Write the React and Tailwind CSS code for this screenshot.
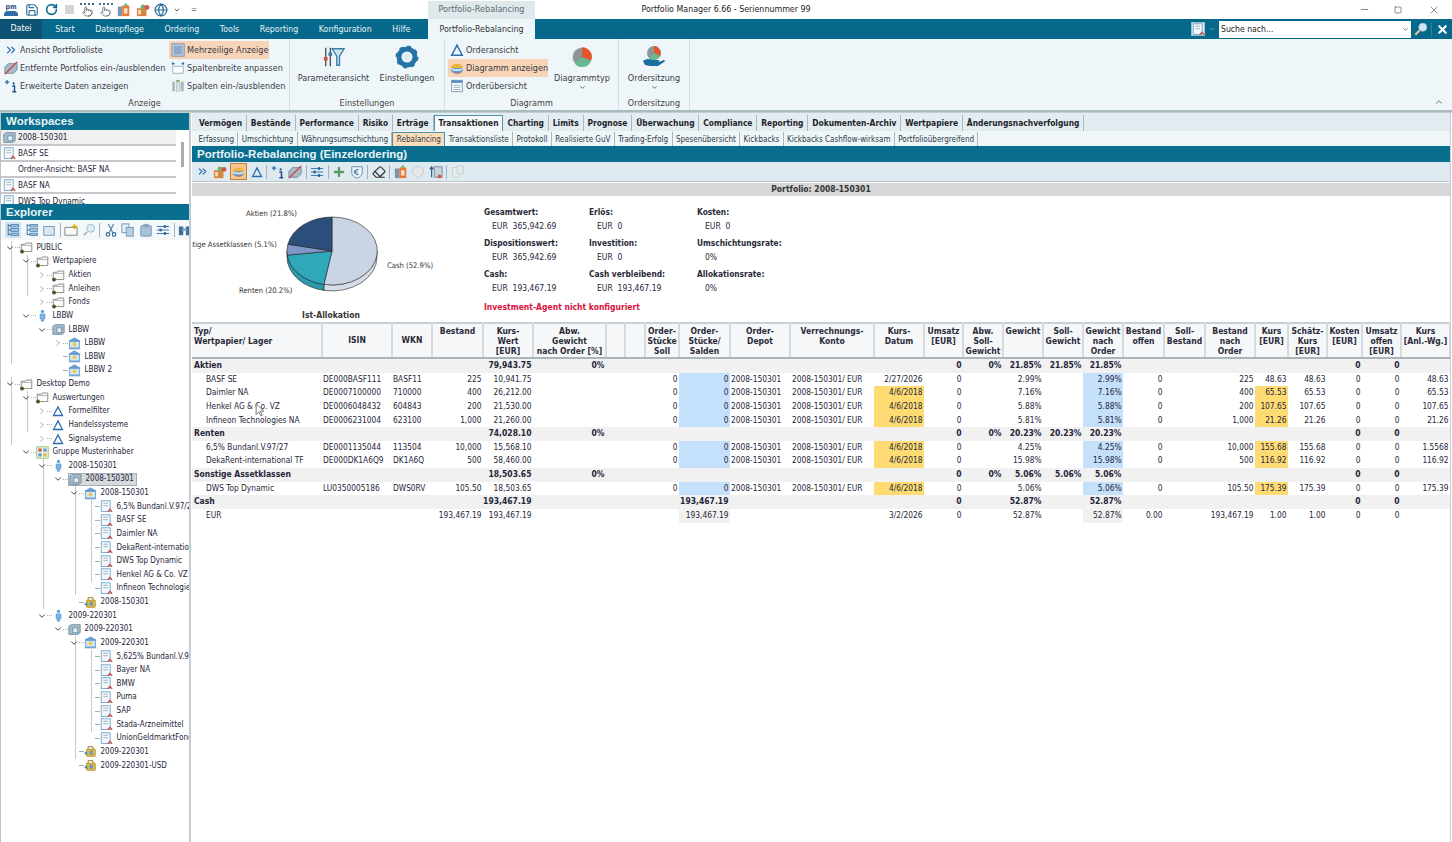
import { ChevronDown, ChevronRight, ChevronsRight, ChevronUp, Minus, Square, X, Save, RotateCw, Pointer, Globe, Plus, Eraser } from 'lucide-react';

// kleine Icons
const Ico = ({ children, className = 'w-[14px] h-[14px]' }) => (
  <svg viewBox="0 0 16 16" className={`shrink-0 ${className}`}>{children}</svg>
);

const Doc = () => (
  <Ico className="w-[13px] h-[13px]">
    <rect x="1.5" y="1" width="11" height="13" fill="#f4f8fb" stroke="#5f9cc4" />
    <path d="M4 4h6M4 7h6" stroke="#9aa7b0" />
    <path d="M9.5 14.5l2.5-3 3 3" fill="none" stroke="#c9443e" strokeWidth="1.5" />
  </Ico>
);
const Folder = () => (
  <Ico className="w-[13px] h-[13px]">
    <path d="M1.5 4h5l1-1.5h7V13h-13z" fill="#fafafa" stroke="#777" />
    <path d="M1.5 5.5h13" stroke="#aaa" />
    <circle cx="2.5" cy="13" r="2" fill="#6b5a10" stroke="#111" strokeWidth=".6" />
  </Ico>
);
const Person = () => (
  <Ico className="w-[13px] h-[13px]">
    <circle cx="8" cy="3" r="2" fill="#5aa0e0" />
    <path d="M5 6h6v6H9.500v3h-3v-3H5z" fill="#78b4ea" stroke="#3d7fbd" strokeWidth=".6" />
  </Ico>
);
const Depot = () => (
  <Ico className="w-[13px] h-[13px]">
    <path d="M1 4l3-2h11v10l-3 2H1z" fill="#a3bacb" stroke="#6d8aa0" />
    <rect x="6" y="6" width="6" height="6" fill="#e5edf3" stroke="#6d8aa0" />
  </Ico>
);
const Bank = () => (
  <Ico className="w-[13px] h-[13px]">
    <path d="M8 1L1 5h14z" fill="#6aa4d4" stroke="#3d7fbd" strokeWidth=".6" />
    <rect x="2" y="5.500" width="12" height="8" fill="#d5e6f4" stroke="#5c96c6" />
    <rect x="6" y="7" width="4" height="4" fill="#ecc544" />
    <path d="M1 14.500h14" stroke="#3d7fbd" />
  </Ico>
);
const Locker = () => (
  <Ico className="w-[13px] h-[13px]">
    <path d="M5 5V2h6v3" fill="none" stroke="#8a6d10" />
    <rect x="3" y="5" width="11" height="9" rx="1" fill="#e6b93a" stroke="#8a6d10" strokeWidth=".6" />
    <path d="M0 10l4-2.500v5z" fill="#4a86bf" />
    <rect x="7" y="7" width="4" height="5" fill="#5f9cd0" />
  </Ico>
);
const Delta = ({ cls = 'w-[12px] h-[12px]' }) => (
  <Ico className={cls}><path d="M8 2.500L14 14H2z" fill="none" stroke="#2b6cb0" strokeWidth="1.700" /></Ico>
);
const GroupIco = () => (
  <Ico className="w-[13px] h-[13px]">
    <rect x="1" y="1" width="14" height="14" fill="#eef5e6" stroke="#8ab86a" />
    <rect x="3" y="3" width="4" height="4" fill="#d9534f" />
    <rect x="9" y="3" width="4" height="4" fill="#5f9cd0" />
    <rect x="3" y="9" width="4" height="4" fill="#5f9cd0" />
    <rect x="9" y="9" width="4" height="4" fill="#e6b93a" />
  </Ico>
);
const PieDisc = ({ cls = 'w-[14px] h-[14px]' }) => (
  <Ico className={cls}>
    <ellipse cx="8" cy="9.500" rx="7" ry="5" fill="#5c9ccf" />
    <path d="M1 8a7 5 0 0 1 14 0z" fill="#f0b23e" />
    <path d="M1 8.500a7 3 0 0 0 14 0l0-1a7 2 0 0 1-14 0z" fill="#e9eef3" />
    <path d="M4 13a7 5 0 0 0 9 0z" fill="#d9695c" />
  </Ico>
);
const InfoPlus = () => (
  <Ico className="w-[14px] h-[14px]">
    <path d="M1 3.500h5M3.500 1v5" stroke="#2b6cb0" strokeWidth="1.500" />
    <circle cx="11" cy="5" r="1.200" fill="#1f4e8a" />
    <path d="M9.500 8h2.500v6M9.500 14.500h4.500" fill="none" stroke="#1f4e8a" strokeWidth="1.700" />
  </Ico>
);
const Strike = () => (
  <Ico>
    <path d="M1 7l4-4h10v7l-4 4H1z" fill="#a9bccb" stroke="#6d8aa0" />
    <path d="M1 15L15 1" stroke="#d23a34" strokeWidth="1.600" />
  </Ico>
);
const Sliders = () => (
  <Ico>
    <path d="M1 4h14M1 8h14M1 12h14" stroke="#3f7fb5" strokeWidth="1.300" />
    <rect x="9" y="2.500" width="2.500" height="3" fill="#1f5f90" />
    <rect x="4" y="6.500" width="2.500" height="3" fill="#1f5f90" />
    <rect x="9" y="10.500" width="2.500" height="3" fill="#1f5f90" />
  </Ico>
);
const TreeView = () => (
  <Ico>
    <path d="M2.500 1v13M2.500 3h3M2.500 8h3M2.500 13h3" stroke="#2f6a9a" />
    <rect x="5.500" y="1.500" width="9" height="3" fill="#9cc3e2" stroke="#2f6a9a" strokeWidth=".7" />
    <rect x="5.500" y="6.500" width="9" height="3" fill="#9cc3e2" stroke="#2f6a9a" strokeWidth=".7" />
    <rect x="5.500" y="11.500" width="9" height="3" fill="#9cc3e2" stroke="#2f6a9a" strokeWidth=".7" />
  </Ico>
);
const ColFit = () => (
  <Ico>
    <path d="M2 6h12v8H2z" fill="#fff" stroke="#8fa9bc" />
    <path d="M1 3h3M12 3h3M2 1.500v3M14 1.500v3" stroke="#2b6cb0" strokeWidth="1.200" />
  </Ico>
);
const ColShow = () => (
  <Ico>
    <rect x="1.500" y="3" width="3" height="11" fill="#a9b6bf" />
    <rect x="6" y="3" width="3.500" height="11" fill="#dbe3e8" stroke="#8fa0ab" strokeWidth=".5" />
    <rect x="11" y="3" width="3.500" height="11" fill="#a9b6bf" />
    <path d="M5.500 1h5l-2.500 3z" fill="#7fb05c" />
  </Ico>
);
const Multi = () => (
  <Ico>
    <rect x="1" y="1" width="14" height="14" fill="#c6d4e2" stroke="#6d8aa0" />
    <rect x="3" y="3" width="10" height="10" fill="#8ea9c9" />
  </Ico>
);
const OrderDoc = () => (
  <Ico>
    <rect x="2" y="1.500" width="12" height="13" fill="#fff" stroke="#6d92b5" />
    <rect x="2" y="1.500" width="12" height="3" fill="#5b8fc0" />
    <path d="M4 7h8M4 9.500h8M4 12h8" stroke="#8ea3b5" />
  </Ico>
);
const Coins = () => (
  <Ico>
    <rect x="1" y="6" width="11" height="9" fill="#d9853f" />
    <rect x="2.500" y="8" width="3" height="5" fill="#f6e2c8" />
    <circle cx="8" cy="4.500" r="2.800" fill="#6fb36f" />
    <circle cx="12.500" cy="5" r="2.800" fill="#d9534f" />
  </Ico>
);
const Building = () => (
  <Ico>
    <rect x="1" y="4" width="5" height="11" fill="#7e95a8" />
    <rect x="6" y="3" width="8" height="12" fill="#e8793c" />
    <rect x="8" y="6" width="4" height="6" fill="#f6e2c8" />
    <path d="M10 0l3 3H7z" fill="#6fb36f" />
  </Ico>
);
const ArrowDoc = () => (
  <Ico>
    <rect x="6" y="2" width="9" height="12" fill="#c7d3dc" stroke="#6d8aa0" />
    <path d="M3 14V2M1 5l2-3 2 3" fill="none" stroke="#2f5f88" strokeWidth="1.400" />
    <circle cx="12" cy="13" r="2.200" fill="#d9534f" />
  </Ico>
);
const Grey = () => <Ico className="w-[14px] h-[14px]"><path d="M8 1l6 3v6l-6 5-6-5V4z" fill="#e4e8ea" stroke="#c6ccd0" /></Ico>;
const GreyDoc = () => <Ico className="w-[14px] h-[14px]"><rect x="2" y="3" width="8" height="11" fill="#e9edef" stroke="#c6ccd0" /><rect x="7" y="1" width="7" height="9" fill="#e4e8ea" stroke="#c6ccd0" /></Ico>;
const HandGrid = ({ cls }) => (
  <span className="flex flex-col items-center shrink-0 w-[14px]">
    <span className="w-[14px] h-[3px] border-t-2 border-dotted border-[#3f6f92]" />
    <Pointer size={11} className={cls} />
  </span>
);

const Bar = () => <span className="w-px h-[14px] bg-[#9fb4c0] shrink-0" />;

function QuickAccess() {
  return (
    <div className="flex items-center gap-[4.500px] pl-[4px] w-[428px] shrink-0">
      <div className="w-[14px] h-[14px] relative flex flex-col items-center leading-none">
        <span className="text-[7px] font-bold text-[#1c4f82] leading-[8px]">pm</span>
        <span className="w-[14px] h-[5px] bg-[#2f6da8] rounded-t-[4px]" />
      </div>
      <Save size={14} className="text-[#356f9e] ml-[2px]" />
      <RotateCw size={13} strokeWidth={3} className="text-[#0b6a93] ml-[2px]" />
      <span className="w-[9px] h-[9px] bg-[#d3d6d8] mx-[2px]" />
      <HandGrid cls="text-[#6c7378]" />
      <HandGrid cls="text-[#6d8293]" />
      <Building />
      <Coins />
      <Globe size={14} className="text-[#1f6a9a]" />
      <ChevronDown size={8} strokeWidth={3} className="text-[#666]" />
      <span className="text-[8px] text-[#666] leading-none ml-[6px]">=</span>
    </div>
  );
}

function TitleBar() {
  return (
    <div className="flex items-center h-[19px] bg-white">
      <QuickAccess />
      <div className="w-[107px] h-[18px] mt-[1px] bg-[#dfe8eb] text-[#5a6a72] flex items-center justify-center text-[9px]">Portfolio-Rebalancing</div>
      <div className="flex-1 text-center text-[#222] text-[8.800px] pr-[430px]">Portfolio Manager 6.66 - Seriennummer 99</div>
      <div className="flex items-center text-[#222] w-[105px]">
        <div className="w-[34px] flex justify-center"><Minus size={11} strokeWidth={1.200} /></div>
        <div className="w-[34px] flex justify-center"><Square size={8} strokeWidth={1.500} /></div>
        <div className="w-[37px] flex justify-center"><X size={12} strokeWidth={1} /></div>
      </div>
    </div>
  );
}

const topTabs = ['Start', 'Datenpflege', 'Ordering', 'Tools', 'Reporting', 'Konfiguration', 'Hilfe'];

function TabBar() {
  return (
    <div className="flex items-stretch h-[20px] bg-[#06698b] text-[8.800px]">
      <div className="w-[42px] bg-[#0b5273] text-white flex items-center justify-center pb-[1px]">Datei</div>
      <div className="flex items-center pl-[3px] pt-[2px] w-[386px] shrink-0">
        {topTabs.map((t) => (
          <span key={t} className="px-[10.300px] text-[#e6f2f6]">{t}</span>
        ))}
      </div>
      <div className="w-[107px] bg-[#eff6f9] text-[#333] flex items-center justify-center pt-[2px]">Portfolio-Rebalancing</div>
      <div className="flex-1" />
      <div className="flex items-center">
        <div className="w-[14px] h-[14px] bg-[#dfeaf0] border border-[#9fc0d2] flex items-center justify-center"><Doc /></div>
        <ChevronDown size={8} strokeWidth={3} className="text-[#5c98ae] mx-[3px]" />
        <div className="w-[192px] h-[17px] bg-white flex items-center justify-between px-[2px] text-[#222] text-[8.600px]">
          <span>Suche nach...</span>
          <ChevronDown size={7} strokeWidth={3} className="text-[#666]" />
        </div>
        <div className="w-[20px] flex justify-center">
          <Ico>
            <circle cx="10" cy="6" r="4.500" fill="#cfe6f5" stroke="#a6cbe2" />
            <path d="M6.500 9.500L1.500 14.500" stroke="#e9c188" strokeWidth="2.500" />
          </Ico>
        </div>
        <div className="w-[21px] flex justify-center border-l border-[#2a84a2]"><X size={13} strokeWidth={4} className="text-white" /></div>
      </div>
    </div>
  );
}

const SmallBtn = ({ icon, label, active }) => (
  <div className={`flex items-center gap-[2px] h-[18px] px-[2px] whitespace-nowrap ${active ? 'bg-[#f7d3b7] w-[100px]' : ''}`}>
    {icon}
    <span className="pt-[2px]">{label}</span>
  </div>
);

const BigBtn = ({ icon, label, arrow, cls }) => (
  <div className={`flex flex-col items-center ${cls}`}>
    <div className="h-[31px] flex items-center justify-center">{icon}</div>
    <span className="leading-[12px]">{label}</span>
    {arrow && <ChevronDown size={7} strokeWidth={3} className="text-[#555]" />}
  </div>
);

const RibbonGroup = ({ title, cls, children }) => (
  <div className={`flex flex-col border-r border-[#d4dfe4] shrink-0 ${cls}`}>
    <div className="flex-1 flex pt-[2px] min-h-0">{children}</div>
    <div className="text-center leading-[13px] h-[13px] text-[#444]">{title}</div>
  </div>
);

function Ribbon() {
  return (
    <div className="relative flex h-[73px] bg-[#eff6f9] border-b-2 border-[#a9babf] text-[9px] text-[#3a3a48]">
      <RibbonGroup title="Anzeige" cls="w-[290px]">
        <div className="flex flex-col pl-[2px] w-[169px]">
          <SmallBtn icon={<ChevronsRight size={14} className="text-[#2b6cb0] shrink-0" />} label="Ansicht Portfolioliste" />
          <SmallBtn icon={<Strike />} label="Entfernte Portfolios ein-/ausblenden" />
          <SmallBtn icon={<InfoPlus />} label="Erweiterte Daten anzeigen" />
        </div>
        <div className="flex flex-col">
          <SmallBtn active icon={<Multi />} label="Mehrzeilige Anzeige" />
          <SmallBtn icon={<ColFit />} label="Spaltenbreite anpassen" />
          <SmallBtn icon={<ColShow />} label="Spalten ein-/ausblenden" />
        </div>
      </RibbonGroup>
      <RibbonGroup title="Einstellungen" cls="w-[155px]">
        <BigBtn cls="w-[87px]" label="Parameteransicht" icon={
          <svg viewBox="0 0 24 24" className="w-[22px] h-[22px]">
            <path d="M10 3h13l-5 8v10h-3V11z" fill="#cfe2ee" stroke="#3d7fa8" strokeWidth="1.500" />
            <path d="M3 2v20M8 2v20" stroke="#555" strokeWidth="1.500" />
            <rect x="1" y="12" width="4" height="4" fill="#d0543c" />
            <rect x="6" y="7" width="4" height="4" fill="#3d7fa8" />
          </svg>
        } />
        <BigBtn cls="w-[60px]" label="Einstellungen" icon={
          <svg viewBox="0 0 24 24" className="w-[24px] h-[24px]">
            <circle cx="12" cy="12" r="8" fill="none" stroke="#2474a6" strokeWidth="5" />
            <circle cx="12" cy="12" r="10" fill="none" stroke="#2474a6" strokeWidth="3" strokeDasharray="3.500 4.350" />
            <circle cx="12" cy="12" r="3.500" fill="#dcebf3" />
          </svg>
        } />
      </RibbonGroup>
      <RibbonGroup title="Diagramm" cls="w-[174px]">
        <div className="flex flex-col pl-[3px] w-[108px]">
          <SmallBtn icon={<Delta cls="w-[14px] h-[14px]" />} label="Orderansicht" />
          <SmallBtn active icon={<PieDisc />} label="Diagramm anzeigen" />
          <SmallBtn icon={<OrderDoc />} label="Orderübersicht" />
        </div>
        <BigBtn cls="w-[58px]" arrow label="Diagrammtyp" icon={
          <svg viewBox="0 0 24 24" className="w-[22px] h-[22px]">
            <circle cx="12" cy="12" r="10.500" fill="#8f9496" stroke="#dfe5e8" />
            <path d="M12 12V1.500A10.500 10.500 0 0 1 22 16z" fill="#e4572e" />
            <path d="M12 12l10 4A10.500 10.500 0 0 1 4 19z" fill="#67b98f" />
          </svg>
        } />
      </RibbonGroup>
      <RibbonGroup title="Ordersitzung" cls="w-[71px]">
        <BigBtn cls="w-[70px]" arrow label="Ordersitzung" icon={
          <svg viewBox="0 0 24 24" className="w-[24px] h-[24px]">
            <circle cx="12" cy="8" r="7" fill="#8f9496" />
            <path d="M12 8V1a7 7 0 0 1 6 10z" fill="#e4572e" />
            <path d="M12 8l6 3a7 7 0 0 1-11 2z" fill="#67b98f" />
            <path d="M1 16c4-3 7-2 10-1h5c2 0 2 2 0 2h-4 5l5-2c1 0 1 2 0 2l-6 4H8l-5-1z" fill="#1a6f9f" />
          </svg>
        } />
      </RibbonGroup>
      <ChevronUp size={10} strokeWidth={2} className="absolute right-[8px] bottom-[3px] text-[#555]" />
    </div>
  );
}

const workspaces = [
  { t: '2008-150301', ic: <Depot />, on: true },
  { t: 'BASF SE', ic: <Doc /> },
  { t: 'Ordner-Ansicht: BASF NA', ic: <span className="w-[13px] shrink-0" /> },
  { t: 'BASF NA', ic: <Doc /> },
  { t: 'DWS Top Dynamic', ic: <Doc /> },
];

const tree = [
  [0, 'd', 'folder', 'PUBLIC', [10]],
  [1, 'd', 'folder', 'Wertpapiere', [10, 26]],
  [2, 'r', 'folder', 'Aktien', [10, 26]],
  [2, 'r', 'folder', 'Anleihen', [10, 26]],
  [2, 'r', 'folder', 'Fonds', [10]],
  [1, 'd', 'person', 'LBBW', [10]],
  [2, 'd', 'depot', 'LBBW', [10]],
  [3, 'r', 'bank', 'LBBW', [10]],
  [3, 'n', 'bank', 'LBBW', [10]],
  [3, 'n', 'bank', 'LBBW 2', []],
  [0, 'd', 'folder', 'Desktop Demo', [10]],
  [1, 'd', 'folder', 'Auswertungen', [10, 26]],
  [2, 'r', 'delta', 'Formelfilter', [10, 26]],
  [2, 'r', 'delta', 'Handelssysteme', [10, 26]],
  [2, 'r', 'delta', 'Signalsysteme', [10]],
  [1, 'd', 'group', 'Gruppe Musterinhaber', []],
  [2, 'd', 'person', '2008-150301', [42]],
  [3, 'd', 'depot', '2008-150301', [42], true],
  [4, 'd', 'bank', '2008-150301', [42, 74]],
  [5, 'n', 'doc', '6,5% Bundanl.V.97/27', [42, 74, 90]],
  [5, 'n', 'doc', 'BASF SE', [42, 74, 90]],
  [5, 'n', 'doc', 'Daimler NA', [42, 74, 90]],
  [5, 'n', 'doc', 'DekaRent-international TF', [42, 74, 90]],
  [5, 'n', 'doc', 'DWS Top Dynamic', [42, 74, 90]],
  [5, 'n', 'doc', 'Henkel AG & Co. VZ', [42, 74, 90]],
  [5, 'n', 'doc', 'Infineon Technologies NA', [42, 74]],
  [4, 'n', 'locker', '2008-150301', [42]],
  [2, 'd', 'person', '2009-220301', []],
  [3, 'd', 'depot', '2009-220301', []],
  [4, 'd', 'bank', '2009-220301', [74]],
  [5, 'n', 'doc', '5,625% Bundanl.V.97/28', [74, 90]],
  [5, 'n', 'doc', 'Bayer NA', [74, 90]],
  [5, 'n', 'doc', 'BMW', [74, 90]],
  [5, 'n', 'doc', 'Puma', [74, 90]],
  [5, 'n', 'doc', 'SAP', [74, 90]],
  [5, 'n', 'doc', 'Stada-Arzneimittel', [74, 90]],
  [5, 'n', 'doc', 'UnionGeldmarktFonds', [74]],
  [4, 'n', 'locker', '2009-220301', [74]],
  [4, 'n', 'locker', '2009-220301-USD', []],
];

const treeIcons = {
  folder: <Folder />, person: <Person />, depot: <Depot />, bank: <Bank />,
  delta: <Delta />, group: <GroupIco />, doc: <Doc />, locker: <Locker />,
};

function TreeRow({ row }) {
  const [level, exp, icon, text, guides, selected] = row;
  return (
    <div className="relative h-[13.640px] flex items-center whitespace-nowrap" style={{ paddingLeft: 4 + level * 16 }}>
      {guides.map((x) => (
        <span key={x} className="absolute top-0 bottom-0 w-px bg-[#c4c9cc]" style={{ left: x }} />
      ))}
      <span className="w-[10px] shrink-0 flex justify-center relative">
        {exp === 'd' && <ChevronDown size={10} strokeWidth={2} className="text-[#222]" />}
        {exp === 'r' && <ChevronRight size={10} strokeWidth={1.500} className="text-[#777]" />}
      </span>
      <span className={`w-[5px] h-px shrink-0 ${exp === 'n' ? 'bg-[#aab0b4]' : 'border-t border-dotted border-[#aab0b4]'}`} />
      <span className={`flex items-center gap-[1.500px] h-[13px] pr-[2px] ${selected ? 'bg-[#d6dadd] border border-[#a5adb2]' : ''}`}>
        <span className="w-[13px] flex shrink-0">{treeIcons[icon]}</span>
        <span className="pl-[2px] leading-[12px]">{text}</span>
      </span>
    </div>
  );
}

function LeftPane() {
  return (
    <div className="w-[189px] shrink-0 flex flex-col border-l border-[#b8c4ca] overflow-hidden text-[8px]">
      <div className="h-[17px] bg-[#0a6f8f] text-[#e8f4f8] font-['Liberation_Sans',sans-serif] font-bold text-[11.500px] flex items-center pl-[5px]">Workspaces</div>
      <div className="relative h-[74px] overflow-hidden text-[8.200px]">
        {workspaces.map((w) => (
          <div key={w.t} className={`h-[16px] flex items-center gap-[2px] pl-[2px] mr-[13px] border-b-2 border-[#c4c8cb] whitespace-nowrap ${w.on ? 'bg-[#f0f0f0]' : ''}`}>
            {w.ic}
            <span>{w.t}</span>
          </div>
        ))}
        <span className="absolute right-[5px] top-[12px] w-[3px] h-[25px] bg-[#a9adb0]" />
      </div>
      <div className="h-[16px] bg-[#0a6f8f] text-[#e8f4f8] font-['Liberation_Sans',sans-serif] font-bold text-[11.500px] flex items-center pl-[5px] pt-[1px]">Explorer</div>
      <div className="h-[20px] flex items-center gap-[3.500px] pl-[4px] bg-[#f5f8fa] overflow-hidden">
        <span className="bg-[#cfe3f2] p-[1px] flex"><TreeView /></span>
        <TreeView />
        <Ico><rect x="2" y="4" width="12" height="10" fill="#dbe7ef" stroke="#6d92b5" /></Ico>
        <Bar />
        <Ico><path d="M1 5h14v9H1z" fill="#fafafa" stroke="#777" /><path d="M12 1v6M9 4h6" stroke="#e0b400" strokeWidth="1.500" /></Ico>
        <Ico><circle cx="10" cy="6" r="4.500" fill="#dcebf5" stroke="#9ab8cc" /><path d="M6 10l-4 4" stroke="#9ab8cc" strokeWidth="2" /></Ico>
        <Bar />
        <Ico><path d="M5 1l5 10M11 1L6 11" stroke="#5c8bb0" strokeWidth="1.300" /><circle cx="4.500" cy="13" r="2" fill="none" stroke="#2f6a9a" strokeWidth="1.300" /><circle cx="11.500" cy="13" r="2" fill="none" stroke="#2f6a9a" strokeWidth="1.300" /></Ico>
        <Ico><rect x="1" y="1" width="8" height="10" fill="#e4edf3" stroke="#6d92b5" /><rect x="6" y="5" width="8" height="10" fill="#b9d0e2" stroke="#6d92b5" /></Ico>
        <Ico><rect x="2" y="3" width="12" height="12" rx="1" fill="#a7c3d9" stroke="#6d92b5" /><rect x="5" y="1" width="6" height="4" fill="#8aa6bc" /></Ico>
        <Sliders />
        <Bar />
        <Ico><rect x="1" y="4" width="5" height="10" fill="#3d6f98" /><rect x="9" y="4" width="5" height="10" fill="#3d6f98" /><rect x="5" y="6" width="5" height="3" fill="#8aa6bc" /></Ico>
      </div>
      <div className="flex-1 overflow-hidden pt-[1px]">
        {tree.map((r, i) => <TreeRow key={i} row={r} />)}
      </div>
    </div>
  );
}

const tabs1 = ['Vermögen', 'Bestände', 'Performance', 'Risiko', 'Erträge', 'Transaktionen', 'Charting', 'Limits', 'Prognose', 'Überwachung', 'Compliance', 'Reporting', 'Dokumenten-Archiv', 'Wertpapiere', 'Änderungsnachverfolgung'];
const tabs2 = ['Erfassung', 'Umschichtung', 'Währungsumschichtung', 'Rebalancing', 'Transaktionsliste', 'Protokoll', 'Realisierte GuV', 'Trading-Erfolg', 'Spesenübersicht', 'Kickbacks', 'Kickbacks Cashflow-wirksam', 'Portfolioübergreifend'];

function SubTabs() {
  return (
    <>
      <div className="h-[18px] flex items-end pl-[3px] bg-[#e3edf1] font-bold text-[8.400px] text-[#1f1f2a]">
        {tabs1.map((t) => (
          <span key={t} className={`h-[16px] flex items-center px-[3.900px] whitespace-nowrap ${t === 'Transaktionen' ? 'bg-[#f5f9fb] border border-b-0 border-[#4f93ab]' : 'border-r border-[#aab8be]'}`}>{t}</span>
        ))}
      </div>
      <div className="h-[15px] flex items-end pl-[3px] bg-[#f0f6f8] text-[#2b3a4a] text-[8px]">
        {tabs2.map((t) => (
          <span key={t} className={`h-[14px] flex items-center px-[3.400px] pt-[1px] whitespace-nowrap ${t === 'Rebalancing' ? 'bg-[#fbdcb9] border border-b-0 border-[#4f93ab]' : 'border-r border-[#aab8be]'}`}>{t}</span>
        ))}
      </div>
    </>
  );
}

function ReToolbar() {
  return (
    <div className="h-[20px] flex items-center gap-[3.500px] pl-[4px] bg-[#dfeaf0] border-b border-[#b8c6cc]">
      <ChevronsRight size={13} className="text-[#2b6cb0]" />
      <Coins />
      <span className="bg-[#f7c690] border border-[#c87f3a] flex p-[1px]"><PieDisc cls="w-[13px] h-[13px]" /></span>
      <Delta />
      <Bar />
      <InfoPlus />
      <Strike />
      <Bar />
      <Sliders />
      <Bar />
      <Plus size={14} strokeWidth={4} className="text-[#5b9a68]" />
      <Ico><path d="M2 2h12v7c0 3-3 5-6 6-3-1-6-3-6-6z" fill="#eef4f8" stroke="#5b83a6" /><path d="M10 5.500a3 3 0 1 0 0 5M4.500 7h4M4.500 9h4" fill="none" stroke="#2f6a9a" /></Ico>
      <Bar />
      <Eraser size={14} className="text-[#333]" />
      <Bar />
      <Building />
      <Grey />
      <ArrowDoc />
      <Bar />
      <GreyDoc />
    </div>
  );
}

const Field = ({ label, value }) => (
  <div className="h-[31px]">
    <div className="font-bold leading-[13px] text-[#2a2a38] text-[8.300px]">{label}</div>
    <div className="pl-[8px] leading-[15px] whitespace-pre">{value}</div>
  </div>
);

function AllocationChart() {
  return (
    <svg width="283" height="126" className="shrink-0 text-[7.600px]" fill="#333">
      <path d="M185 55A45 34 0 0 1 131.900 88.400L131.900 94.400A45 34 0 0 0 185 61Z" fill="#d6dde9" stroke="#222" strokeWidth=".6" />
      <path d="M131.900 88.400A45 34 0 0 1 95 55L95 61A45 34 0 0 0 131.900 94.400Z" fill="#2a9bab" stroke="#222" strokeWidth=".6" />
      <path d="M140 55L140 21A45 34 0 1 1 131.900 88.400Z" fill="#c9d4e5" stroke="#222" strokeWidth=".6" />
      <path d="M140 55L131.900 88.400A45 34 0 0 1 95.300 59.100Z" fill="#2fa9ba" stroke="#222" strokeWidth=".6" />
      <path d="M140 55L95.300 59.100A45 34 0 0 1 95.900 48.200Z" fill="#7e97c6" stroke="#222" strokeWidth=".6" />
      <path d="M140 55L95.900 48.200A45 34 0 0 1 140 21Z" fill="#2b4e7a" stroke="#222" strokeWidth=".6" />
      <text x="54" y="20">Aktien (21.8%)</text>
      <text x="85" y="51" textAnchor="end">Sonstige Assetklassen (5.1%)</text>
      <text x="47" y="97">Renten (20.2%)</text>
      <text x="195" y="72">Cash (52.9%)</text>
      <text x="139" y="122" textAnchor="middle" fontWeight="700" fontSize="8.500">Ist-Allokation</text>
    </svg>
  );
}

function Summary() {
  return (
    <div className="flex-1 pl-[9px] pt-[10px]">
      <div className="grid grid-cols-[105px_108px_200px]">
        <Field label="Gesamtwert:" value="EUR  365,942.69" />
        <Field label="Erlös:" value="EUR  0" />
        <Field label="Kosten:" value="EUR  0" />
        <Field label="Dispositionswert:" value="EUR  365,942.69" />
        <Field label="Investition:" value="EUR  0" />
        <Field label="Umschichtungsrate:" value="0%" />
        <Field label="Cash:" value="EUR  193,467.19" />
        <Field label="Cash verbleibend:" value="EUR  193,467.19" />
        <Field label="Allokationsrate:" value="0%" />
      </div>
      <div className="font-bold text-[#d8123f] leading-[13px] mt-[2px]">Investment-Agent nicht konfiguriert</div>
    </div>
  );
}

const colWidths = [130, 70, 40, 51, 50, 73, 19, 20, 34, 51, 60, 84, 50, 39, 40, 40, 40, 40, 41, 41, 50, 33, 39, 35, 39, 49];

const headers = [
  'Typ/\nWertpapier/ Lager', 'ISIN', 'WKN', 'Bestand', 'Kurs-\nWert\n[EUR]', 'Abw.\nGewicht\nnach Order [%]', '', '',
  'Order-\nStücke\nSoll', 'Order-\nStücke/\nSalden', 'Order-\nDepot', 'Verrechnungs-\nKonto', 'Kurs-\nDatum', 'Umsatz\n[EUR]',
  'Abw.\nSoll-\nGewicht', 'Gewicht', 'Soll-\nGewicht', 'Gewicht\nnach\nOrder', 'Bestand\noffen', 'Soll-\nBestand', 'Bestand\nnach\nOrder',
  'Kurs\n[EUR]', 'Schätz-\nKurs\n[EUR]', 'Kosten\n[EUR]', 'Umsatz\noffen\n[EUR]', 'Kurs\n[Anl.-Wg.]',
];

const VR = '2008-150301/ EUR';
const D = '2008-150301';
const pos = (name, isin, wkn, best, wert, soll, datum, gew, nach, bestNach, kurs, schaetz, anl, stale) => ({
  cells: [name, isin, wkn, best, wert, '', '', '', soll, '0', D, VR, datum, '0', '', gew, '', nach, '0', '', bestNach, kurs, schaetz, '0', '0', anl],
  stale,
});
const group = (name, wert, abw, salden, abwSoll, gew, soll, nach) => ({
  group: true,
  cells: [name, '', '', '', wert, abw, '', '', '', salden, '', '', '', '0', abwSoll, gew, soll, nach, '', '', '', '', '', '0', '0', ''],
});

const rows = [
  group('Aktien', '79,943.75', '0%', '', '0%', '21.85%', '21.85%', '21.85%'),
  pos('BASF SE', 'DE000BASF111', 'BASF11', '225', '10,941.75', '0', '2/27/2026', '2.99%', '2.99%', '225', '48.63', '48.63', '48.63', false),
  pos('Daimler NA', 'DE0007100000', '710000', '400', '26,212.00', '0', '4/6/2018', '7.16%', '7.16%', '400', '65.53', '65.53', '65.53', true),
  pos('Henkel AG & Co. VZ', 'DE0006048432', '604843', '200', '21,530.00', '0', '4/6/2018', '5.88%', '5.88%', '200', '107.65', '107.65', '107.65', true),
  pos('Infineon Technologies NA', 'DE0006231004', '623100', '1,000', '21,260.00', '0', '4/6/2018', '5.81%', '5.81%', '1,000', '21.26', '21.26', '21.26', true),
  group('Renten', '74,028.10', '0%', '', '0%', '20.23%', '20.23%', '20.23%'),
  pos('6,5% Bundanl.V.97/27', 'DE0001135044', '113504', '10,000', '15,568.10', '0', '4/6/2018', '4.25%', '4.25%', '10,000', '155.68', '155.68', '1.5568', true),
  pos('DekaRent-international TF', 'DE000DK1A6Q9', 'DK1A6Q', '500', '58,460.00', '0', '4/6/2018', '15.98%', '15.98%', '500', '116.92', '116.92', '116.92', true),
  group('Sonstige Assetklassen', '18,503.65', '0%', '', '0%', '5.06%', '5.06%', '5.06%'),
  pos('DWS Top Dynamic', 'LU0350005186', 'DWS0RV', '105.50', '18,503.65', '0', '4/6/2018', '5.06%', '5.06%', '105.50', '175.39', '175.39', '175.39', true),
  group('Cash', '193,467.19', '', '193,467.19', '', '52.87%', '', '52.87%'),
  {
    cash: true,
    cells: ['EUR', '', '', '193,467.19', '193,467.19', '', '', '', '', '193,467.19', '', '', '3/2/2026', '0', '', '52.87%', '', '52.87%', '0.00', '', '193,467.19', '1.00', '1.00', '0', '0', ''],
  },
];

function cellClass(row, i) {
  let bg = 'text-[8.300px]';
  if (row.group) bg = 'bg-[#f2f1f1] font-bold text-[8.500px]';
  else if (row.cash) bg = i === 9 || i === 17 ? 'bg-[#f2f1f1] text-[8.300px]' : 'text-[8.300px]';
  else if (i === 9 || i === 17) bg = 'bg-[#c4e0fb] text-[8.300px]';
  else if (row.stale && (i === 12 || i === 21)) bg = 'bg-[#ffdc73] text-[8.300px]';
  let align = 'text-right pr-[1.500px]';
  if (i === 0) align = row.group ? 'text-left pl-[2px]' : 'text-left pl-[14px]';
  if (i === 1 || i === 2 || i === 10) align = 'text-left pl-[1px]';
  if (i === 11) align = 'text-left pl-[2px]';
  return `${bg} ${align}`;
}

function PositionsTable() {
  return (
    <div className="relative">
      <table className="table-fixed border-collapse w-[1258px]">
        <colgroup>
          {colWidths.map((w, i) => <col key={i} style={{ width: w }} />)}
        </colgroup>
        <thead>
          <tr className="h-[35px]">
            {headers.map((h, i) => (
              <th key={i} className={`bg-[#f6f7f8] border-r-2 border-b-2 border-t-2 border-t-[#c7d0d4] border-r-[#d4dadd] border-b-[#aab4b9] font-bold text-[#2a2a38] leading-[9.800px] whitespace-pre-line px-0 overflow-hidden ${i === 0 ? 'text-left pl-[2px]' : 'text-center'} ${i === 1 || i === 2 ? 'align-middle' : 'align-top pt-[3px]'}`}>{h}</th>
            ))}
          </tr>
        </thead>
        <tbody>
          {rows.map((r, ri) => (
            <tr key={ri} className="h-[13.640px]">
              {r.cells.map((c, i) => (
                <td key={i} className={`p-0 whitespace-nowrap overflow-hidden leading-[13.640px] ${cellClass(r, i)}`}>{c}</td>
              ))}
            </tr>
          ))}
        </tbody>
      </table>
      <svg viewBox="0 0 12 18" className="absolute left-[63px] top-[81px] w-[10px] h-[14px]">
        <path d="M1 1v14l3.500-3.500 2.500 5 2-1-2.500-5H11z" fill="#fff" stroke="#555" />
      </svg>
    </div>
  );
}

function MainPane() {
  return (
    <div className="flex-1 min-w-0 flex flex-col border-l-2 border-r border-[#c2ced3] pl-[1px] mr-[1px] overflow-hidden">
      <SubTabs />
      <div className="h-[16px] bg-[#0a6f8f] text-[#e8f4f8] font-['Liberation_Sans',sans-serif] font-bold text-[11.500px] flex items-center pl-[5px] pt-[1px]">Portfolio-Rebalancing (Einzelordering)</div>
      <ReToolbar />
      <div className="h-[13px] mt-[1px] bg-[#d7d7d7] text-center font-bold leading-[13px] text-[#333]">Portfolio:  2008-150301</div>
      <div className="flex h-[126px]">
        <AllocationChart />
        <Summary />
      </div>
      <PositionsTable />
    </div>
  );
}

export default function App() {
  return (
    <div className="w-[1452px] h-[842px] overflow-hidden bg-white flex flex-col font-['DejaVu_Sans_Condensed','Noto_Sans',sans-serif] text-[8.500px] text-[#26263a]">
      <TitleBar />
      <TabBar />
      <Ribbon />
      <div className="flex flex-1 min-h-0 border-t border-[#c2ced3]">
        <LeftPane />
        <MainPane />
      </div>
    </div>
  );
}
